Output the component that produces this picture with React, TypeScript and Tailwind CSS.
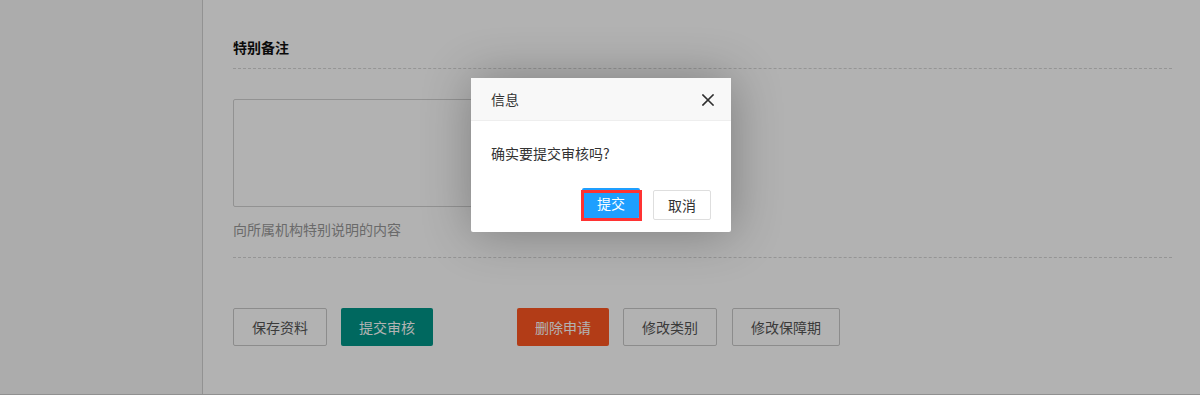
import React from "react";

const font = {
  fontFamily: '"Noto Sans CJK SC", "Noto Sans", "Liberation Sans", sans-serif',
};

const PrimaryBtn = ({ label, className = "" }: { label: string; className?: string }) => (
  <button
    className={
      "h-[38px] rounded-[2px] border border-[#c9c9c9] bg-white px-[18px] text-[14px] leading-[36px] text-[#555] " +
      className
    }
  >
    {label}
  </button>
);

const ConfirmLayer = () => (
  <div className="absolute left-[471px] top-[78px] w-[260px] rounded-[2px] bg-white shadow-[1px_1px_50px_rgba(0,0,0,0.3)]">
    <div className="relative h-[43px] border-b border-[#eeeeee] bg-[#f8f8f8] pl-[20px] text-[14px] leading-[42px] text-[#333]">
      信息
      <svg
        className="absolute right-[17px] top-[16px]"
        width="12"
        height="12"
        viewBox="0 0 12 12"
      >
        <path d="M1 1 L11 11 M11 1 L1 11" stroke="#2f2f2f" strokeWidth="1.6" strokeLinecap="square" />
      </svg>
    </div>
    <div className="px-[20px] pt-[20px] text-[14px] leading-[24px] text-[#333]">确实要提交审核吗?</div>
    <div className="flex items-start justify-end gap-[13px] pb-[12px] pl-[15px] pr-[20px] pt-[23px]">
      <div className="relative">
        <button className="h-[30px] w-[58px] rounded-[2px] bg-[#1e9fff] text-[14px] text-white">提交</button>
        <span className="pointer-events-none absolute -left-[1px] -right-[2px] -bottom-[3px] top-[2px] border-[3px] border-[#ff3333]" />
      </div>
      <button className="mt-[2px] h-[30px] w-[58px] rounded-[2px] border border-[#dedede] bg-white text-[14px] text-[#333]">
        取消
      </button>
    </div>
  </div>
);

export default function App() {
  return (
    <div className="relative h-[395px] w-[1200px] overflow-hidden bg-white" style={font}>
      <div className="flex h-full border-b border-[#cfcfcf]">
        <aside className="w-[203px] shrink-0 border-r border-[#d2d2d2] bg-[#f6f6f6]" />
        <main className="flex-1 pl-[30px] pr-[28px] pt-[37px]">
          <div className="border-b border-dashed border-[#d6d6d6] pb-[11px]">
            <h3 className="text-[14px] font-bold leading-[20px] text-[#111]">特别备注</h3>
          </div>
          <div className="border-b border-dashed border-[#d6d6d6] pb-[18px] pt-[30px]">
            <textarea className="block h-[108px] w-[450px] resize-none rounded-[2px] border border-[#d2d2d2] bg-white" />
            <p className="mt-[12px] text-[14px] leading-[20px] text-[#999]">向所属机构特别说明的内容</p>
          </div>
          <div className="flex pt-[50px]">
            <PrimaryBtn label="保存资料" />
            <button className="ml-[14px] h-[38px] w-[92px] rounded-[2px] bg-[#009688] text-[14px] text-white">
              提交审核
            </button>
            <button className="ml-[84px] h-[38px] w-[92px] rounded-[2px] bg-[#ff5722] text-[14px] text-white">
              删除申请
            </button>
            <PrimaryBtn label="修改类别" className="ml-[14px]" />
            <PrimaryBtn label="修改保障期" className="ml-[15px]" />
          </div>
        </main>
      </div>
      <div className="absolute inset-0 bg-black/30" />
      <ConfirmLayer />
    </div>
  );
}
